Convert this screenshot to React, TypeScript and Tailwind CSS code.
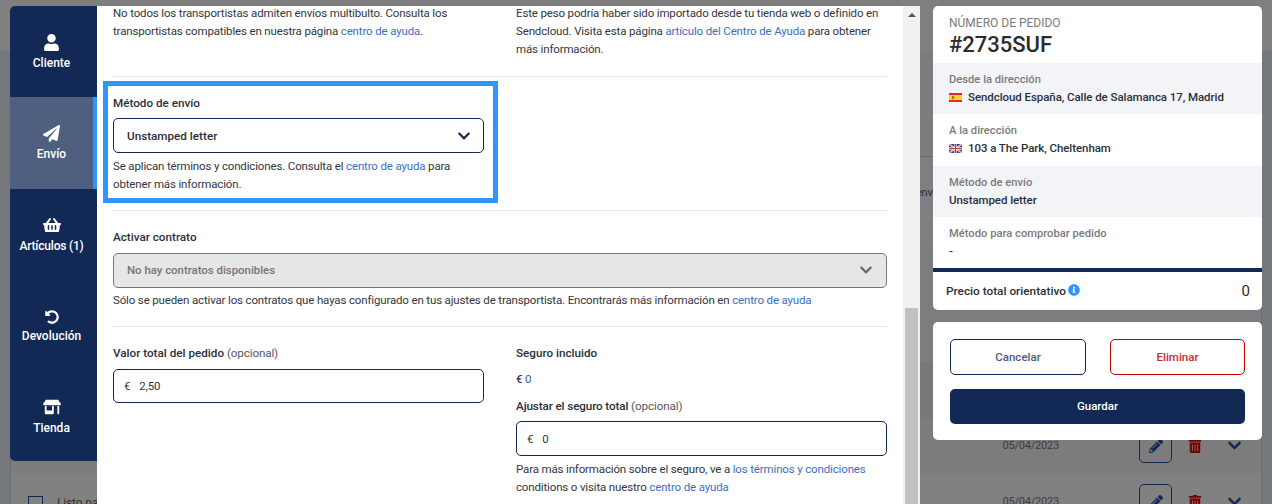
import { FaChevronDown, FaInfoCircle, FaPaperPlane, FaPencilAlt, FaShoppingBasket, FaStoreAlt, FaTrashAlt, FaUndoAlt, FaUser } from 'react-icons/fa'
import type { ReactNode } from 'react'

const navItems = [
  { label: 'Cliente', icon: <FaUser size={17} />, height: 'h-[91px]' },
  { label: 'Envío', icon: <FaPaperPlane size={17} />, height: 'h-[92px]', active: true },
  { label: 'Artículos (1)', icon: <FaShoppingBasket size={18} />, height: 'h-[91px]', tight: true },
  { label: 'Devolución', icon: <FaUndoAlt size={14} />, height: 'h-[92px]' },
  { label: 'Tienda', icon: <FaStoreAlt size={18} />, height: 'h-[89px]' },
]

function HelpLink({ children }: { children: ReactNode }) {
  return <span className="text-[#3b6fc4]">{children}</span>
}

function SpainFlag() {
  return (
    <svg width="13" height="9" viewBox="0 0 13 9" className="shrink-0">
      <rect width="13" height="9" fill="#e8262a" />
      <rect y="2" width="13" height="5" fill="#fbd327" />
      <rect x="3" y="3" width="2" height="3" fill="#c0632f" />
    </svg>
  )
}

function UkFlag() {
  return (
    <svg width="13" height="9" viewBox="0 0 13 9" className="shrink-0">
      <rect width="13" height="9" fill="#2c3f80" />
      <path d="M0 0L13 9M13 0L0 9" stroke="#f2f2f6" strokeWidth="1.6" />
      <path d="M0 0L13 9M13 0L0 9" stroke="#d04a5a" strokeWidth="0.5" />
      <path d="M6.5 0V9M0 4.5H13" stroke="#f2f2f6" strokeWidth="2.4" />
      <path d="M6.5 0V9M0 4.5H13" stroke="#cf2f3f" strokeWidth="1.1" />
    </svg>
  )
}

function SummaryRow({ title, value, shaded, flag }: { title: string; value: string; shaded?: boolean; flag?: ReactNode }) {
  return (
    <div className={`h-[51.25px] pl-[16px] pr-2 pt-[7px] ${shaded ? 'bg-[#f3f4f8]' : 'bg-white'}`}>
      <div className="mt-[1px] text-[11.2px] leading-[18px] font-medium tracking-normal text-[#7b7b7b]">{title}</div>
      <div className="-mt-[1px] flex items-center gap-[6px] text-[11.5px] leading-[18px] font-medium tracking-[-0.07px] text-[#2b2f38]">
        {flag}
        <span>{value}</span>
      </div>
    </div>
  )
}

function DateRowActions() {
  return (
    <>
      <span className="mr-[80px] text-[11px] tracking-[-0.2px] text-[#3c3c3c]">05/04/2023</span>
      <div className="flex h-[35px] w-[33px] shrink-0 items-center justify-center rounded-[5px] border border-[#12284f] text-[#12284f]"><FaPencilAlt size={14} /></div>
      <FaTrashAlt size={14} className="mr-[25px] ml-[16px] shrink-0 text-[#750000]" />
      <FaChevronDown size={15} className="shrink-0 text-[#12284f]" />
    </>
  )
}

function BackgroundPage() {
  return (
    <div className="absolute inset-0 flex flex-col bg-[#7f7f7f]">
      <div className="h-[51px] shrink-0 bg-[#7f7f7f]" />
      <div className="flex flex-1 flex-col bg-[#75787a] pl-[10px] pr-[10px]">
        <div className="flex flex-1 flex-col border-x border-[#6e6e6e] bg-[#7a7c7e]">
          <div className="h-[106px] shrink-0 border-b border-[#6a6a6a]" />
          <div className="flex h-[90px] shrink-0 justify-end bg-[#7e7f80] pt-[26px] pr-[328px] text-[11.5px] text-[#2f2f2f]">env</div>
          <div className="h-[115px] shrink-0 bg-[#7c7d7e]" />
          <div className="h-[56px] shrink-0 bg-[#787878]" />
          <div className="flex h-[55px] shrink-0 items-center justify-end bg-[#7c7c7c] pr-[19px]">
            <DateRowActions />
          </div>
          <div className="relative flex-1 overflow-hidden bg-[#818181]">
            <div className="flex h-[57px] items-center justify-end pr-[19px]">
              <DateRowActions />
            </div>
            <div className="absolute left-[17px] top-[21px] flex items-center gap-[14px] text-[12px] text-[#333]">
              <div className="h-[15px] w-[15px] border border-[#12284f]" />
              <span>Listo para enviar</span>
            </div>
          </div>
        </div>
      </div>
    </div>
  )
}

export default function App() {
  return (
    <div className="relative h-[504px] w-[1272px] overflow-hidden font-['Roboto',sans-serif] text-[11.5px] leading-[18px] tracking-[-0.15px] text-[#33363d]">
      <BackgroundPage />

      <div className="relative flex h-full pt-[6px] pl-[10px]">
        <nav className="flex h-[455px] w-[87px] shrink-0 flex-col overflow-hidden rounded-l-[5px] bg-[#122955] tracking-normal text-white">
          {navItems.map(item => (
            <div
              key={item.label}
              className={`flex ${item.height} flex-col items-center justify-center gap-[3px] border-r-4 pt-[2px] text-[12px] font-medium ${item.active ? 'border-[#2e96ff] bg-[#4f5f80]' : 'border-transparent'} ${item.tight ? 'tracking-[-0.2px]' : ''}`}
            >
              {item.icon}
              <span>{item.label}</span>
            </div>
          ))}
        </nav>

        <main className="flex h-[498px] w-[823px] shrink-0 overflow-hidden bg-white">
          <div className="w-[806px] shrink-0 pl-[16px]">
            <div className="-mt-[2px] grid grid-cols-[371px_371px] gap-x-[32px]">
              <p>No todos los transportistas admiten envíos multibulto. Consulta los transportistas compatibles en nuestra página <HelpLink>centro de ayuda</HelpLink>.</p>
              <p>Este peso podría haber sido importado desde tu tienda web o definido en Sendcloud. Visita esta página <HelpLink>artículo del Centro de Ayuda</HelpLink> para obtener más información.</p>
            </div>

            <div className="mt-[18px] h-px w-[774px] bg-[#e6e6e6]" />

            <div className="-ml-[10px] mt-[4px] h-[122px] w-[395px] border-[5px] border-[#2e96ff] px-[5px] pt-[8px]">
              <div className="text-[11.7px] font-medium tracking-normal text-[#2b2f38]">Método de envío</div>
              <div className="mt-[6px] flex h-[35px] w-[371px] items-center justify-between rounded-[5px] border border-[#12284f] pr-[12px] pl-[13px] text-[11.7px] font-medium tracking-normal text-[#2b2f38]">
                <span>Unstamped letter</span>
                <FaChevronDown size={14} className="text-[#12284f]" />
              </div>
              <p className="mt-[4px] w-[371px]">Se aplican términos y condiciones. Consulta el <HelpLink>centro de ayuda</HelpLink> para obtener más información.</p>
            </div>

            <div className="mt-[7px] h-px w-[774px] bg-[#e6e6e6]" />

            <div className="mt-[17px] text-[11.7px] font-medium tracking-normal text-[#2b2f38]">Activar contrato</div>
            <div className="mt-[7px] flex h-[35px] w-[774px] items-center justify-between rounded-[5px] border border-[#757575] bg-[#e6e6e6] pr-[13px] pb-[2px] pl-[13px] text-[11.4px] font-medium tracking-normal text-[#757575]">
              <span>No hay contratos disponibles</span>
              <FaChevronDown size={14} className="text-[#666]" />
            </div>
            <p className="mt-[3px]">Sólo se pueden activar los contratos que hayas configurado en tus ajustes de transportista. Encontrarás más información en <HelpLink>centro de ayuda</HelpLink></p>

            <div className="mt-[17px] h-px w-[774px] bg-[#e6e6e6]" />

            <div className="mt-[17px] grid grid-cols-[371px_371px] gap-x-[32px]">
              <div>
                <div className="text-[11.7px] font-medium tracking-normal text-[#2b2f38]">Valor total del pedido <span className="font-normal tracking-[-0.15px] text-[#55585f]">(opcional)</span></div>
                <div className="mt-[7px] flex h-[34px] items-center gap-[9px] rounded-[5px] border border-[#12284f] pl-[10px]">
                  <span>€</span>
                  <span>2,50</span>
                </div>
              </div>
              <div>
                <div className="text-[11.7px] font-medium tracking-normal text-[#2b2f38]">Seguro incluido</div>
                <div className="mt-[8px]"><span className="font-medium">€</span> <span className="text-[#3f5f8a]">0</span></div>
                <div className="mt-[9px] text-[11.7px] font-medium tracking-[-0.12px] text-[#2b2f38]">Ajustar el seguro total <span className="font-normal text-[#55585f]">(opcional)</span></div>
                <div className="mt-[6px] flex h-[35px] items-center gap-[9px] rounded-[5px] border border-[#12284f] pl-[10px]">
                  <span>€</span>
                  <span>0</span>
                </div>
                <p className="mt-[4px]">Para más información sobre el seguro, ve a <HelpLink>los términos y condiciones</HelpLink> conditions o visita nuestro <HelpLink>centro de ayuda</HelpLink></p>
              </div>
            </div>
          </div>

          <div className="flex w-[17px] shrink-0 flex-col bg-[#f1f1f1]">
            <div className="flex h-[302px] justify-center pt-[7px]">
              <div className="h-0 w-0 border-x-[4px] border-b-[4px] border-x-transparent border-b-[#505050]" />
            </div>
            <div className="mx-[2px] flex-1 bg-[#c1c1c1]" />
          </div>
        </main>

        <aside className="ml-[13px] w-[329px] shrink-0 tracking-normal">
          <section className="h-[304px] overflow-hidden rounded-[5px] bg-white">
            <div className="h-[57px] pl-[16px] pt-[9px]">
              <div className="text-[12px] leading-[16px] text-[#7b7b7b]">NÚMERO DE PEDIDO</div>
              <div className="text-[22px] leading-[27px] font-medium text-[#2b2b2b]">#2735SUF</div>
            </div>
            <SummaryRow shaded title="Desde la dirección" value="Sendcloud España, Calle de Salamanca 17, Madrid" flag={<SpainFlag />} />
            <SummaryRow title="A la dirección" value="103 a The Park, Cheltenham" flag={<UkFlag />} />
            <SummaryRow shaded title="Método de envío" value="Unstamped letter" />
            <SummaryRow title="Método para comprobar pedido" value="-" />
            <div className="h-[4px] bg-[#122955]" />
            <div className="flex h-[38px] items-center justify-between pr-[12px] pl-[13px]">
              <div className="flex items-center gap-[1px] text-[11.8px] font-medium text-[#2b2f38]">
                Precio total orientativo
                <FaInfoCircle size={12} className="mb-[2px] ml-[1px] text-[#2e96ff]" />
              </div>
              <span className="text-[15px] text-[#2b2b2b]">0</span>
            </div>
          </section>

          <section className="mt-[12px] h-[118px] rounded-[5px] bg-white px-[17px] pt-[17px]">
            <div className="flex justify-between">
              <button className="h-[36px] w-[136px] rounded-[5px] border border-[#12284f] text-[11.5px] font-medium text-[#4a5a80]">Cancelar</button>
              <button className="h-[36px] w-[135px] rounded-[5px] border border-[#c40000] text-[11.5px] font-medium text-[#c8282d]">Eliminar</button>
            </div>
            <button className="mt-[14px] h-[35px] w-[295px] rounded-[5px] bg-[#122955] pb-[2px] text-[11.5px] font-medium text-white">Guardar</button>
          </section>
        </aside>
      </div>
    </div>
  )
}
